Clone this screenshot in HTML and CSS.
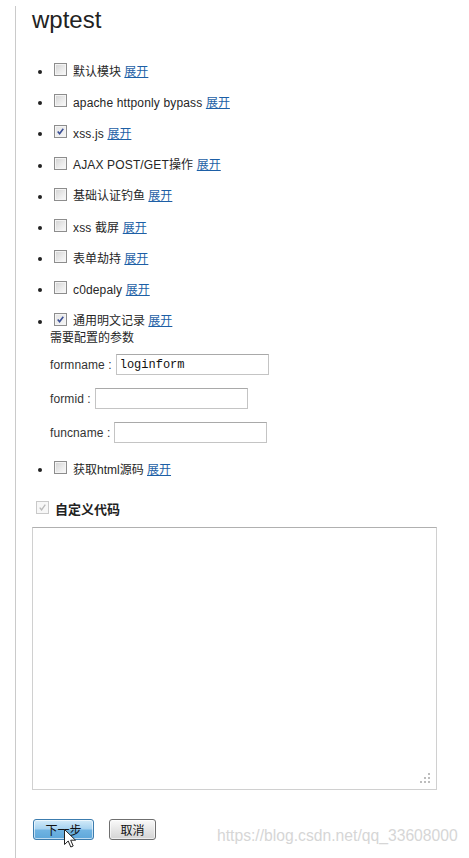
FILE: index.html
```html
<!DOCTYPE html>
<html lang="zh">
<head>
<meta charset="utf-8">
<title>wptest</title>
<link rel="stylesheet" href="styles.css">
</head>
<body>
<div class="page">
  <h1 class="title">wptest</h1>
  <ul class="modules">
    <li class="module"><div class="row"><span class="bullet"></span><span class="cb"></span><span class="label">默认模块 <a href="#" class="more">展开</a></span></div></li>
    <li class="module"><div class="row"><span class="bullet"></span><span class="cb"></span><span class="label latin">apache httponly bypass <a href="#" class="more">展开</a></span></div></li>
    <li class="module"><div class="row"><span class="bullet"></span><span class="cb checked"><svg viewBox="0 0 13 13"><path d="M3.2 6.6 L5.4 9.2 L9.8 3.2" fill="none" stroke="#3b4f95" stroke-width="1.9"/></svg></span><span class="label latin">xss.js <a href="#" class="more">展开</a></span></div></li>
    <li class="module"><div class="row"><span class="bullet"></span><span class="cb"></span><span class="label latin">AJAX POST/GET操作 <a href="#" class="more">展开</a></span></div></li>
    <li class="module"><div class="row"><span class="bullet"></span><span class="cb"></span><span class="label">基础认证钓鱼 <a href="#" class="more">展开</a></span></div></li>
    <li class="module"><div class="row"><span class="bullet"></span><span class="cb"></span><span class="label latin">xss 截屏 <a href="#" class="more">展开</a></span></div></li>
    <li class="module"><div class="row"><span class="bullet"></span><span class="cb"></span><span class="label">表单劫持 <a href="#" class="more">展开</a></span></div></li>
    <li class="module"><div class="row"><span class="bullet"></span><span class="cb"></span><span class="label latin">c0depaly <a href="#" class="more">展开</a></span></div></li>
    <li class="module"><div class="row"><span class="bullet"></span><span class="cb checked"><svg viewBox="0 0 13 13"><path d="M3.2 6.6 L5.4 9.2 L9.8 3.2" fill="none" stroke="#3b4f95" stroke-width="1.9"/></svg></span><span class="label">通用明文记录 <a href="#" class="more">展开</a></span></div>
      <div class="params">
        <div class="params-title">需要配置的参数</div>
        <div class="fields">
          <label class="field"><span class="field-name">formname :</span><input class="input input-name" type="text" value="loginform"></label>
          <label class="field"><span class="field-name">formid :</span><input class="input" type="text"></label>
          <label class="field"><span class="field-name">funcname :</span><input class="input" type="text"></label>
        </div>
      </div>
    </li>
    <li class="module"><div class="row"><span class="bullet"></span><span class="cb"></span><span class="label">获取html源码 <a href="#" class="more">展开</a></span></div></li>
  </ul>
  <div class="custom">
    <span class="cb checked disabled"><svg viewBox="0 0 13 13"><path d="M3.2 6.6 L5.4 9.2 L9.8 3.2" fill="none" stroke="#b9b9b9" stroke-width="1.6"/></svg></span>
    <span class="custom-label">自定义代码</span>
  </div>
  <div class="code">
    <svg class="grip" viewBox="0 0 12 12" width="12" height="12">
      <rect x="9" y="1" width="2" height="2" fill="#bdbdbd"/>
      <rect x="5" y="5" width="2" height="2" fill="#bdbdbd"/>
      <rect x="9" y="5" width="2" height="2" fill="#bdbdbd"/>
      <rect x="1" y="9" width="2" height="2" fill="#bdbdbd"/>
      <rect x="5" y="9" width="2" height="2" fill="#bdbdbd"/>
      <rect x="9" y="9" width="2" height="2" fill="#bdbdbd"/>
    </svg>
  </div>
  <div class="actions">
    <button class="btn btn-primary" type="button">下一步</button>
    <button class="btn" type="button">取消</button>
  </div>
</div>
<div class="watermark">https://blog.csdn.net/qq_33608000</div>
<svg class="cursor" viewBox="0 0 13 20" width="13" height="20">
  <path d="M0.5 0.5 L0.5 15.5 L4.2 12 L6.8 18 L9.2 17 L6.7 11.2 L11.5 11.2 Z" fill="#fff" stroke="#222" stroke-width="1" stroke-linejoin="round"/>
</svg>
</body>
</html>
```

FILE: styles.css
```css
* { box-sizing: border-box; }
html, body { margin: 0; padding: 0; background: #fff; }
body {
  font-family: "Liberation Sans", Arial, "Noto Sans CJK SC", sans-serif;
  font-size: 12px;
  color: #262626;
  width: 469px;
  height: 858px;
  overflow: hidden;
  position: relative;
}
.page {
  margin-left: 15px;
  border-left: 1px solid #cacaca;
  padding-left: 16px;
  min-height: 858px;
}
.title {
  margin: 6px 0 0;
  font-size: 24px;
  line-height: 28px;
  font-weight: normal;
  color: #222;
}
.modules {
  list-style: none;
  margin: 22px 0 0;
  padding: 0 0 0 6px;
}
.module { padding: 5.6px 0; }
.row {
  display: flex;
  align-items: center;
  height: 20px;
  line-height: 20px;
}
.bullet {
  width: 4px;
  height: 4px;
  border-radius: 50%;
  background: #222;
  margin-right: 12px;
  margin-top: 1px;
}
.cb {
  width: 13px;
  height: 13px;
  border: 1px solid #8d8d8d;
  background: linear-gradient(135deg, #d2d2d2 0%, #ececec 60%, #fafafa 100%);
  box-shadow: inset 0 0 0 1px #f4f4f4;
  margin-bottom: 4px;
  display: flex;
  flex: none;
}
.cb svg { width: 11px; height: 11px; display: block; }
.cb.checked { background: linear-gradient(135deg, #e4e4e4 0%, #f6f6f6 100%); }
.cb.disabled { border-color: #c9c9c9; background: #f7f7f7; box-shadow: none; }
.label { margin-left: 6px; white-space: nowrap; }
.label.latin { letter-spacing: 0.15px; }
.more { color: #1d5fa6; text-decoration: underline; letter-spacing: 0; }
.params { padding-left: 12px; }
.params-title { line-height: 14px; height: 14px; }
.fields {
  display: flex;
  flex-direction: column;
  gap: 13px;
  margin: 9.4px 0 5px;
}
.field {
  display: flex;
  align-items: center;
  gap: 4px;
  height: 21px;
  color: #333;
}
.field-name { letter-spacing: 0.1px; }
.input {
  width: 153px;
  height: 21px;
  border: 1px solid #c4c4c4;
  border-top-color: #a9a9a9;
  padding: 0 3px;
  margin: 0;
  font-family: "Liberation Mono", "Courier New", monospace;
  font-size: 12px;
  color: #111;
  background: #fff;
  outline: none;
}
.custom {
  display: flex;
  align-items: center;
  height: 20px;
  margin: 13px 0 0 4px;
}
.custom .cb { margin-bottom: 2px; }
.custom-label {
  margin-left: 6px;
  font-size: 13px;
  font-weight: bold;
  color: #222;
}
.code {
  position: relative;
  width: 405px;
  height: 263px;
  margin-top: 9px;
  border: 1px solid #d0d0d0;
  border-top-color: #b0b0b0;
  background: #fff;
}
.grip { position: absolute; right: 5px; bottom: 5px; }
.actions {
  display: flex;
  gap: 15px;
  margin: 29px 0 0 1px;
}
.btn {
  height: 21px;
  width: 47px;
  padding: 0;
  border: 1px solid #6f6f6f;
  border-radius: 3px;
  background: linear-gradient(#fafafa, #e6e6e6 50%, #d4d4d4);
  font-family: "Liberation Sans", Arial, "Noto Sans CJK SC", sans-serif;
  font-size: 12px;
  color: #111;
  box-shadow: inset 0 0 0 1px rgba(255,255,255,0.6);
}
.btn-primary {
  width: 61px;
  border-color: #3c7cae;
  background: linear-gradient(#d3ebf9, #a8d3f0 45%, #6fb3e2 55%, #5ea7da);
}
.watermark {
  position: absolute;
  left: 217px;
  top: 827px;
  font-size: 15.7px;
  line-height: 18px;
  color: #d6d6d6;
  white-space: nowrap;
}
.cursor { position: absolute; left: 64px; top: 829px; }
```
